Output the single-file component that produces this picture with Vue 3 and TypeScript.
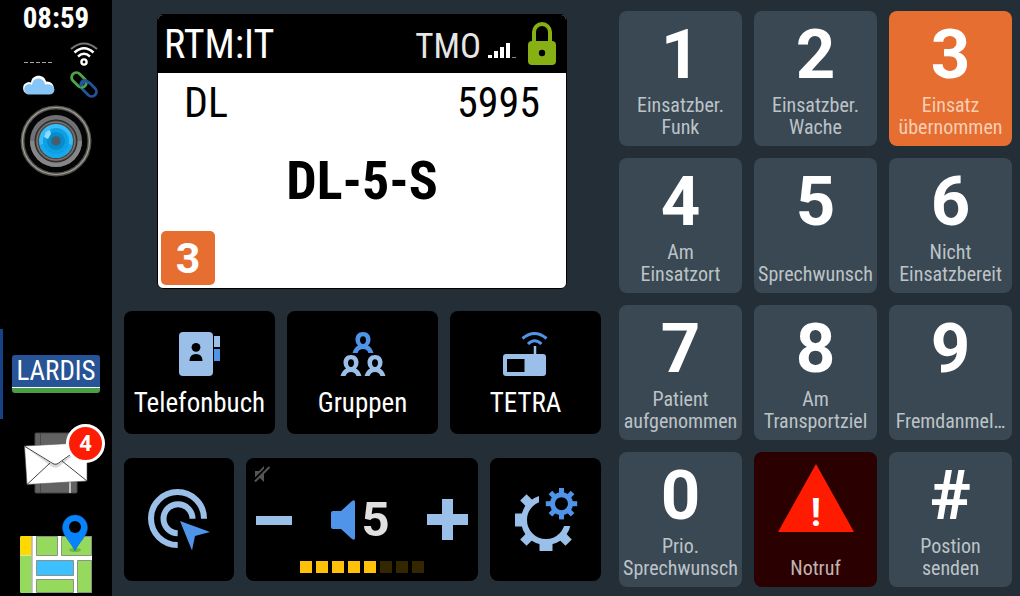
<script setup lang="ts">
import { ref } from 'vue'

interface StatusKey {
  digit: string
  label: string
}

const keys: StatusKey[] = [
  { digit: '1', label: 'Einsatzber.\nFunk' },
  { digit: '2', label: 'Einsatzber.\nWache' },
  { digit: '3', label: 'Einsatz\nübernommen' },
  { digit: '4', label: 'Am\nEinsatzort' },
  { digit: '5', label: 'Sprechwunsch' },
  { digit: '6', label: 'Nicht\nEinsatzbereit' },
  { digit: '7', label: 'Patient\naufgenommen' },
  { digit: '8', label: 'Am\nTransportziel' },
  { digit: '9', label: 'Fremdanmel…' },
  { digit: '0', label: 'Prio.\nSprechwunsch' },
  { digit: '!', label: 'Notruf' },
  { digit: '#', label: 'Postion\nsenden' },
]

const status = ref('3')
const volume = ref(5)
const maxVolume = 8

function changeVolume(step: number): void {
  volume.value = Math.min(maxVolume, Math.max(0, volume.value + step))
}

function selectStatus(key: StatusKey): void {
  if (/[0-9]/.test(key.digit)) status.value = key.digit
}
</script>

<template>
  <div class="app">
    <aside class="sidebar">
      <time class="clock">08:59</time>
      <div class="indicators">
        <svg width="30" height="24" viewBox="0 0 30 24" aria-hidden="true">
          <path d="M1 20.500H29" stroke="#a8a8a8" stroke-width="1" stroke-dasharray="4 2" />
        </svg>
        <svg width="28" height="24" viewBox="0 0 28 24" fill="none" aria-hidden="true">
          <path d="M1 7Q14-4 27 7" stroke="#777" stroke-width="2" />
          <path d="M4.500 10.500Q14 2 23.500 10.500" stroke="#fff" stroke-width="2.400" />
          <path d="M8 14.500Q14 9 20 14.500" stroke="#fff" stroke-width="2.400" />
          <circle cx="14" cy="20" r="2.600" stroke="#fff" stroke-width="2.400" />
        </svg>
        <svg width="34" height="20" viewBox="0 0 34 20" aria-hidden="true">
          <path d="M7 19A6 6 0 0 1 6 7.500Q8 6.500 10 7.500C11-2 24-1 25 6.500Q32 6 33 13Z" fill="#fff" />
          <path d="M7 19.500A5.500 5.500 0 0 1 6 9.500Q9 8.500 11 10C12 1 23 2 24 9.500Q32 8 33.500 14.500Q33 19.500 28 19.500Z" fill="#86c5f5" />
        </svg>
        <svg width="28" height="28" viewBox="0 0 28 28" fill="none" stroke-width="2.800" aria-hidden="true">
          <rect x="10.500" y="13.200" width="17" height="9.600" rx="4.800" transform="rotate(45 19 18)" stroke="#24539a" />
          <rect x="0.500" y="4.200" width="17" height="9.600" rx="4.800" transform="rotate(45 9 9)" stroke="#4ba646" />
          <path d="M11.500 15.500C9.500 12.500 12 9 15.500 9.500L19 12" stroke="#24539a" />
        </svg>
      </div>
      <button class="camera" type="button" aria-label="Kamera">
        <svg width="72" height="72" viewBox="0 0 72 72">
          <circle cx="36" cy="36" r="33.500" fill="#050505" stroke="#555350" stroke-width="4" />
          <circle cx="36" cy="36" r="33.500" fill="none" stroke="#a6a29c" stroke-width="1.200" />
          <circle cx="36" cy="36" r="26" fill="#707174" />
          <path d="M10 36A26 26 0 0 0 62 36Z" fill="#85868a" />
          <circle cx="36" cy="36" r="21" fill="#4b4845" stroke="#24211f" />
          <circle cx="36" cy="36" r="19" fill="none" stroke="#8a8782" />
          <circle cx="36" cy="36" r="17" fill="#36bdfb" />
          <path d="M19.500 40A17 17 0 0 0 52.500 40L36 36Z" fill="#16a7ed" />
          <circle cx="36" cy="36" r="13" fill="#0da0e4" />
          <circle cx="36" cy="36" r="9" fill="#078bc9" />
          <circle cx="36" cy="36" r="5" fill="#2e6a88" />
          <circle cx="36" cy="36" r="3" fill="#515961" />
          <path d="M24 32Q25 26 30 25L31 29L28 34Z" fill="#8bdcff" />
        </svg>
      </button>
      <nav class="apps">
        <a class="app-link current" href="#lardis"><span class="lardis">LARDIS</span></a>
        <a class="app-link" href="#nachrichten" aria-label="Nachrichten">
          <span class="mail">
            <svg width="80" height="70" viewBox="0 0 80 70">
              <rect x="11" y="9" width="42" height="60" rx="1" fill="#626262" stroke="#454545" />
              <path d="M16.500 9V69" stroke="#484848" />
              <path d="M46 58V69" stroke="#c2c2c2" stroke-width="2" />
              <path d="M0.500 22L63 18.500V57L3 60.500Z" fill="#fff" stroke="#555" stroke-width=".6" />
              <path d="M1 23L27 42Q32 46 37 41L62 21L37 38Q32 42 27 39Z" fill="#d8d8d8" />
              <path d="M1 22.500L28 39Q32 42 36 38L63 19M3 60.500L26 39M63 57L38 37" fill="none" stroke="#454545" stroke-width="1" />
            </svg>
            <span class="count">4</span>
          </span>
        </a>
        <a class="app-link map" href="#karte" aria-label="Karte">
          <svg width="72" height="80" viewBox="0 0 72 80">
            <rect y="22" width="72" height="57" rx="2" fill="#fff" />
            <path d="M0 41V24Q0 22 2 22H11.500V41Z" fill="#ffd800" />
            <path d="M0 41.500H11.500V79H2Q0 79 0 77Z" fill="#95da5c" />
            <path d="M12 22V79" stroke="#8c9287" />
            <g stroke="#8c9287" stroke-width="1">
              <path d="M16.500 22.500H37.500V41.500H16.500ZM41.500 22.500H71.500V41.500H41.500ZM57.500 46.500H71.500V78.500H57.500ZM16.500 65.500H53.500V78.500H16.500Z" fill="#95da5c" />
              <path d="M16.500 46.500H53.500V61.500H16.500Z" fill="#3dc0ff" />
            </g>
            <ellipse cx="55" cy="36" rx="6" ry="2" fill="#71b83f" />
            <path d="M55 37C51 28 42.500 22 42.500 13.500A12.500 12.500 0 0 1 67.500 13.500C67.500 22 59 28 55 37Z" fill="#0784fb" stroke="#0868c5" stroke-width=".5" />
            <circle cx="55" cy="13" r="6" fill="#000" />
          </svg>
        </a>
      </nav>
    </aside>

    <main class="main">
      <section class="radio">
        <div class="display">
          <header class="display-head">
            <span class="device">RTM:IT</span>
            <span class="mode">TMO</span>
            <svg class="signal" width="28" height="16" viewBox="0 0 28 16" aria-hidden="true">
              <path d="M0 13H4V16H0ZM6 9H10V16H6ZM12 5H16V16H12ZM18 1H22V16H18Z" fill="#fff" />
              <path d="M24 15H28V16H24Z" fill="#888" />
            </svg>
            <svg class="lock" width="28" height="43" viewBox="0 0 28 43" aria-hidden="true">
              <path d="M6 22V10A8 8 0 0 1 22 10V22" fill="none" stroke="#86b013" stroke-width="4" />
              <rect y="19" width="28" height="24" rx="4" fill="#86b013" />
              <circle cx="14" cy="31" r="3.200" fill="#000" />
            </svg>
          </header>
          <div class="display-body">
            <div class="line"><span>DL</span><span>5995</span></div>
            <div class="group">DL-5-S</div>
            <div class="status">{{ status }}</div>
          </div>
        </div>

        <div class="menu">
          <button type="button" class="tile">
            <svg width="41" height="44" viewBox="0 0 41 44" aria-hidden="true">
              <rect width="34" height="44" rx="4" fill="#9abfe9" />
              <circle cx="17" cy="15.300" r="4.400" fill="#000" />
              <path d="M10.500 29Q10.500 22 17 22T23.500 29Z" fill="#000" />
              <path d="M35 4H41V15H35Z" fill="#9abfe9" />
              <path d="M35 17H41V29H35Z" fill="#4f94e9" />
            </svg>
            <span>Telefonbuch</span>
          </button>
          <button type="button" class="tile">
            <svg width="46" height="44" viewBox="0 0 46 44" aria-hidden="true">
              <defs>
                <g id="person">
                  <path fill-rule="evenodd" d="M0 0C5 0 7.500 3.500 7.500 7.500C7.500 10 6.500 12 5 13.500Q9 15.500 10.500 21H5.500Q4 17 0 17T-5.500 21H-10.500Q-9 15.500-5 13.500C-6.500 12-7.500 10-7.500 7.500C-7.500 3.500-5 0 0 0ZM0 4.300C-2 4.300-3 6-3 8S-2 12 0 12S3 10 3 8S2 4.300 0 4.300Z" />
                </g>
              </defs>
              <use href="#person" x="23" y="0" fill="#4f94e9" />
              <use href="#person" x="11" y="23" fill="#9abfe9" />
              <use href="#person" x="35" y="23" fill="#9abfe9" />
            </svg>
            <span>Gruppen</span>
          </button>
          <button type="button" class="tile">
            <svg width="46" height="44" viewBox="0 0 46 44" aria-hidden="true">
              <path fill-rule="evenodd" d="M3 22H40Q43 22 43 25V41Q43 44 40 44H3Q0 44 0 41V25Q0 22 3 22ZM4 27V40H21.500V27Z" fill="#9abfe9" />
              <path d="M32 14V23" stroke="#9abfe9" stroke-width="2.500" />
              <path d="M19.500 6.500Q31.500-3.500 43.500 6.500M25 12Q31.500 5.500 38.500 12" fill="none" stroke="#4f94e9" stroke-width="3" />
            </svg>
            <span>TETRA</span>
          </button>
        </div>

        <div class="controls">
          <button type="button" class="tile icon-tile" aria-label="Auswahl">
            <svg width="62" height="62" viewBox="0 0 62 62">
              <path d="M56 29.700A26.500 26.500 0 1 0 29.700 56M44.500 29.700A14.500 14.500 0 1 0 29.700 44.300" fill="none" stroke="#9abfe9" stroke-width="6" />
              <path d="M32 32L62 43L47 47L44 61.500Z" fill="#4f94e9" />
            </svg>
          </button>

          <div class="volume">
            <svg class="mute" width="16" height="16" viewBox="0 0 16 16" aria-hidden="true">
              <path d="M1 5H5L10 0V16L5 11H1Z" fill="#555" />
              <path d="M-1 15L14 0" stroke="#000" stroke-width="2" />
              <path d="M1 15.500L15.500 1" stroke="#555" stroke-width="2" />
            </svg>
            <div class="volume-row">
              <button type="button" class="step" aria-label="Leiser" @click="changeVolume(-1)">
                <svg width="36" height="42" viewBox="0 0 36 42"><path d="M0 17H36V26H0Z" fill="#9abfe9" /></svg>
              </button>
              <div class="level">
                <svg width="24" height="40" viewBox="0 0 24 40" aria-hidden="true">
                  <path d="M2 11H10L21 1Q24-1 24 2V38Q24 41 21 39L10 29H2Q0 29 0 27V13Q0 11 2 11Z" fill="#4f94e9" />
                </svg>
                <output>{{ volume }}</output>
              </div>
              <button type="button" class="step" aria-label="Lauter" @click="changeVolume(1)">
                <svg width="41" height="42" viewBox="0 0 41 42"><path d="M15 0H26V15H41V26H26V41H15V26H0V15H15Z" fill="#9abfe9" /></svg>
              </button>
            </div>
            <div class="bars">
              <i v-for="n in maxVolume" :key="n" :class="{ on: n <= volume }"></i>
            </div>
          </div>

          <button type="button" class="tile icon-tile" aria-label="Einstellungen">
            <svg width="64" height="64" viewBox="0 0 64 64">
              <defs>
                <clipPath id="gear-cut"><path d="M0 0H25V38H64V64H0Z" /></clipPath>
              </defs>
              <g clip-path="url(#gear-cut)" fill="#9abfe9">
                <circle cx="32" cy="32" r="22" fill="none" stroke="#9abfe9" stroke-width="6" />
                <rect v-for="a in [0, 90]" :key="a" x="25.500" y="54" width="13" height="9" :transform="`rotate(${a} 32 32)`" />
                <rect v-for="a in [45, 135, 315]" :key="a" x="27.500" y="54" width="9" height="10" :transform="`rotate(${a} 32 32)`" />
              </g>
              <circle cx="47.500" cy="15.700" r="9" fill="none" stroke="#4f94e9" stroke-width="5" />
              <rect v-for="a in [0, 45, 90, 135, 180, 225, 270, 315]" :key="a" x="45" y="0" width="5" height="6" fill="#4f94e9" :transform="`rotate(${a} 47.5 15.7)`" />
            </svg>
          </button>
        </div>
      </section>

      <section class="keypad">
        <button
          v-for="key in keys"
          :key="key.digit"
          type="button"
          class="key"
          :class="{ active: key.digit === status, alarm: key.digit === '!' }"
          @click="selectStatus(key)"
        >
          <svg v-if="key.digit === '!'" class="warning" width="76" height="80" viewBox="0 0 76 80">
            <path d="M38 0L76 68H0Z" fill="#ff1b00" />
            <text x="38" y="62" text-anchor="middle">!</text>
          </svg>
          <span v-else class="digit">{{ key.digit }}</span>
          <span class="label">{{ key.label }}</span>
        </button>
      </section>
    </main>
  </div>
</template>

<style>
html,
body {
  background: #242e36;
}
</style>

<style scoped>
.app {
  display: flex;
  min-height: 100vh;
  background: #242e36;
  color: #fff;
  font-family: "Roboto Condensed", "Liberation Sans Narrow", Roboto, sans-serif;
}
.app * {
  box-sizing: border-box;
}
svg {
  display: block;
  flex: none;
}
button {
  margin: 0;
  padding: 0;
  border: 0;
  background: none;
  color: inherit;
  font-family: inherit;
  cursor: pointer;
}
.sidebar {
  display: flex;
  flex: none;
  flex-direction: column;
  align-items: center;
  width: 112px;
  background: #000;
}
.clock {
  font-size: 29px;
  font-weight: 700;
  line-height: 36px;
}
.indicators {
  display: grid;
  grid-template-columns: 34px 28px;
  gap: 5px 15px;
  align-items: center;
  padding: 6px 0 0 6px;
}
.indicators svg {
  justify-self: center;
}
.camera {
  margin-top: 6px;
}
.apps {
  display: flex;
  flex-direction: column;
  width: 100%;
  margin-top: auto;
}
.app-link {
  display: flex;
  align-items: center;
  justify-content: center;
  height: 80px;
  color: #fff;
  text-decoration: none;
}
.app-link.current {
  height: 90px;
  border-right: 3px solid transparent;
  border-left: 3px solid #164386;
}
.app-link.map {
  align-items: flex-end;
  height: 97px;
  padding-bottom: 2px;
}
.lardis {
  width: 88px;
  border-bottom: 5px solid #4a9e45;
  border-radius: 3px;
  background: #275397;
  box-shadow: inset 0 -1px #fff;
  font-size: 27px;
  line-height: 33px;
  text-align: center;
}
.mail {
  position: relative;
  margin-left: 16px;
}
.count {
  position: absolute;
  top: 0;
  right: -1px;
  width: 39px;
  height: 39px;
  border: 3px solid #fff;
  border-radius: 50%;
  background: #fd1d04;
  font: 700 22px/33px Roboto, sans-serif;
  text-align: center;
}
.main {
  display: grid;
  flex: 1;
  grid-template-columns: minmax(0, 477fr) minmax(0, 393fr);
  gap: 18px;
  padding: 11px 8px 9px 12px;
}
.radio {
  display: flex;
  flex-direction: column;
  padding: 3px 0 6px;
}
.display {
  display: flex;
  flex: 1;
  flex-direction: column;
  margin: 0 34px 22px 33px;
  overflow: hidden;
  border: 1px solid #000;
  border-radius: 6px;
  background: #fff;
}
.display-head {
  display: flex;
  align-items: flex-end;
  height: 58px;
  padding: 0 10px 8px 6px;
  background: #000;
}
.device {
  flex: 1;
  font-size: 40px;
  line-height: 40px;
}
.mode {
  color: #e6e6e6;
  font-size: 35px;
  line-height: 36px;
}
.signal {
  margin: 0 12px 7px 7px;
}
.display-body {
  display: flex;
  flex: 1;
  flex-direction: column;
  color: #000;
}
.line {
  display: flex;
  justify-content: space-between;
  padding: 5px 26px 0;
  font-size: 42px;
  line-height: 50px;
}
.group {
  margin-top: 20px;
  font-size: 54px;
  font-weight: 700;
  line-height: 66px;
  text-align: center;
}
.status {
  width: 54px;
  margin: auto 0 3px 3px;
  border-radius: 5px;
  background: #e56e30;
  color: #fff;
  font: 700 43px/54px Roboto, sans-serif;
  text-align: center;
}
.menu {
  display: grid;
  grid-template-columns: repeat(3, minmax(0, 1fr));
  gap: 12px;
  margin-bottom: 24px;
}
.controls {
  display: grid;
  grid-template-columns: minmax(0, 110fr) minmax(0, 232fr) minmax(0, 111fr);
  gap: 12px;
}
.tile {
  display: flex;
  flex-direction: column;
  align-items: center;
  height: 123px;
  padding-top: 21px;
  border-radius: 8px;
  background: #000;
  font-size: 27px;
  line-height: 32px;
}
.tile span {
  margin-top: 11px;
}
.icon-tile {
  justify-content: center;
  padding-top: 0;
}
.volume {
  display: flex;
  flex-direction: column;
  height: 123px;
  padding: 8px 10px;
  border-radius: 8px;
  background: #000;
}
.mute {
  margin-left: -2px;
}
.volume-row {
  display: flex;
  flex: 1;
  align-items: center;
  justify-content: space-between;
  padding-bottom: 4px;
}
.level {
  display: flex;
  align-items: center;
  gap: 6px;
  padding-left: 2px;
}
.level output {
  color: #e0e0e0;
  font: 700 49px/60px Roboto, sans-serif;
}
.bars {
  display: flex;
  justify-content: center;
  gap: 4px;
}
.bars i {
  width: 12px;
  height: 12px;
  background: #342600;
}
.bars i.on {
  background: #ffc107;
}
.keypad {
  display: grid;
  grid-template-columns: repeat(3, minmax(0, 1fr));
  grid-template-rows: repeat(4, minmax(135px, 1fr));
  gap: 12px;
}
.key {
  display: flex;
  flex-direction: column;
  align-items: center;
  justify-content: space-between;
  padding: 5px 0 8px;
  border-radius: 8px;
  background: #394853;
}
.key.active {
  background: #e56e30;
}
.key.alarm {
  padding-top: 12px;
  background: #2a0100;
}
.digit {
  font: 700 69px/78px Roboto, sans-serif;
}
.warning text {
  fill: #fff;
  font: 700 38px Roboto, sans-serif;
}
.label {
  color: #bdc3c7;
  font-size: 20px;
  line-height: 22px;
  text-align: center;
  white-space: pre;
}
.key.active .label {
  color: #f8cdb4;
}
.key.alarm .label {
  color: #c1b4b3;
}
</style>
